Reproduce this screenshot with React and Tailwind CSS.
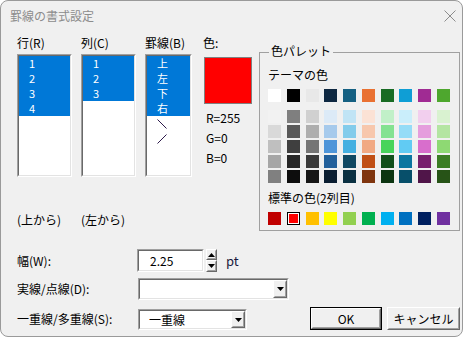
import React from "react"

const theme = ["#ffffff", "#000000", "#e8e8e8", "#0e2841", "#156082", "#e97132", "#196b24", "#0f9ed5", "#a02b93", "#4ea72e"]
const shades = [
  ["#f2f2f2", "#7f7f7f", "#d0d0d0", "#dceaf7", "#c0e4f5", "#fbe2d5", "#c1f0c8", "#caeefb", "#f2cfee", "#d9f2d0"],
  ["#d9d9d9", "#595959", "#aeaeae", "#a6caec", "#83cceb", "#f7c7ac", "#84e291", "#95dcf7", "#e59edd", "#b4e5a2"],
  ["#bfbfbf", "#3f3f3f", "#757575", "#4e95d9", "#45b0e1", "#f1a983", "#47d45a", "#61cbf3", "#d86ecc", "#8ed973"],
  ["#a6a6a6", "#262626", "#3a3a3a", "#215f9a", "#104862", "#c04f15", "#124f1a", "#0b76a0", "#77206d", "#3b7d23"],
  ["#808080", "#0d0d0d", "#171717", "#0a1e31", "#0a3041", "#7f350e", "#0c3511", "#074f6a", "#501549", "#275317"],
]
const standard = ["#c00000", "#ff0000", "#ffc000", "#ffff00", "#92d050", "#00b050", "#00b0f0", "#0070c0", "#002060", "#7030a0"]

const Sunken = ({ className, children }) => (
  <div className={`border border-t-[#a0a0a0] border-l-[#a0a0a0] border-r-white border-b-white ${className}`}>
    <div className="h-full w-full border border-t-[#696969] border-l-[#696969] border-r-[#e3e3e3] border-b-[#e3e3e3] bg-white">
      {children}
    </div>
  </div>
)

const ListBox = ({ width, items }) => (
  <Sunken className={`${width} h-[123px]`}>
    {items.map((it, i) => (
      <div
        key={i}
        className={`h-[15px] pl-[10px] flex items-center text-[11px] leading-[13px] overflow-hidden ${it.sel ? "bg-[#0078d7] text-white" : "text-black"}`}
      >
        {it.label}
      </div>
    ))}
  </Sunken>
)

const Diag = ({ flip }) => (
  <svg width="10" height="10" viewBox="0 0 10 10">
    {flip ? (
      <line x1="0.5" y1="9.5" x2="9.5" y2="0.5" stroke="#2d1a4a" strokeWidth="1" />
    ) : (
      <line x1="0.5" y1="0.5" x2="9.5" y2="9.5" stroke="#2d1a4a" strokeWidth="1" />
    )}
  </svg>
)

const Raised = ({ className, children }) => (
  <div className={`border border-t-white border-l-white border-r-[#696969] border-b-[#696969] bg-[#f0f0f0] ${className}`}>
    <div className="h-full w-full border border-t-[#f0f0f0] border-l-[#f0f0f0] border-r-[#a0a0a0] border-b-[#a0a0a0] flex items-center justify-center">
      {children}
    </div>
  </div>
)

const Tri = ({ up }) => (
  <svg width="7" height="4" viewBox="0 0 7 4">
    {up ? <path d="M0 4 L3.5 0 L7 4 Z" fill="#000" /> : <path d="M0 0 L7 0 L3.5 4 Z" fill="#000" />}
  </svg>
)

const Combo = ({ className, text }) => (
  <Sunken className={className}>
    <div className="h-full flex items-center">
      <div className="flex-1 pl-[9px] leading-none">{text}</div>
      <Raised className="w-[14px] h-full">
        <Tri />
      </Raised>
    </div>
  </Sunken>
)

export default function App() {
  return (
    <div className="w-[467px] h-[339px] bg-white font-['Noto_Sans_CJK_JP','Liberation_Sans',sans-serif] text-[12px] text-black">
      <div className="w-[463px] h-[337px] rounded-[8px] border border-[#9a9a9a] bg-[#f0f0f0] overflow-hidden flex flex-col">
        {/* title bar */}
        <div className="h-[29px] flex items-center justify-between pl-[9px] pr-[5px]">
          <span className="text-[#8c8c8c] text-[12px] leading-none">罫線の書式設定</span>
          <svg width="12" height="12" viewBox="0 0 12 12" className="mr-[1px]">
            <path d="M0.5 0.5 L11.5 11.5 M11.5 0.5 L0.5 11.5" stroke="#8c8c8c" strokeWidth="1" />
          </svg>
        </div>

        {/* top section */}
        <div className="h-[201px] flex pl-[16px] pt-[6px]">
          <div className="w-[55px] flex flex-col">
            <div className="h-[18px] leading-none pt-[1px]">行(R)</div>
            <ListBox
              width="w-[55px]"
              items={[
                { label: "1", sel: true },
                { label: "2", sel: true },
                { label: "3", sel: true },
                { label: "4", sel: true },
              ]}
            />
            <div className="mt-[37px] leading-none">(上から)</div>
          </div>
          <div className="w-[55px] ml-[9px] flex flex-col">
            <div className="h-[18px] leading-none pt-[1px]">列(C)</div>
            <ListBox
              width="w-[55px]"
              items={[
                { label: "1", sel: true },
                { label: "2", sel: true },
                { label: "3", sel: true },
              ]}
            />
            <div className="mt-[37px] leading-none">(左から)</div>
          </div>
          <div className="w-[47px] ml-[9px] flex flex-col">
            <div className="h-[18px] leading-none pt-[1px]">罫線(B)</div>
            <ListBox
              width="w-[47px]"
              items={[
                { label: "上", sel: true },
                { label: "左", sel: true },
                { label: "下", sel: true },
                { label: "右", sel: true },
                { label: <Diag />, sel: false },
                { label: <Diag flip />, sel: false },
              ]}
            />
          </div>
          <div className="w-[50px] ml-[11px] flex flex-col">
            <div className="h-[18px] leading-none pt-[1px]">色:</div>
            <div className="ml-[1px] mt-[3px] w-[48px] h-[47px] border border-[#808080] bg-[#ff0000]" />
            <div className="mt-[4px] pl-[3px]">
              <div className="h-[20px] flex items-center">R=255</div>
              <div className="h-[20px] flex items-center">G=0</div>
              <div className="h-[20px] flex items-center">B=0</div>
            </div>
          </div>

          {/* palette group */}
          <div className="relative ml-[6px] mt-[16px] w-[201px] h-[179px] border border-[#a0a0a0]">
            <div className="absolute -top-[8px] left-[9px] px-[2px] bg-[#f0f0f0] leading-none text-[12px]">色パレット</div>
            <div className="pl-[8px] pt-[14px]">
              <div className="h-[16px] flex items-center">テーマの色</div>
              <div className="mt-[6px] w-[182px] flex justify-between">
                {theme.map((c, i) => (
                  <div key={i} className="w-[13px] h-[13px]" style={{ background: c }} />
                ))}
              </div>
              <div className="mt-[8px] flex flex-col gap-[2px]">
                {shades.map((row, r) => (
                  <div key={r} className="w-[182px] flex justify-between">
                    {row.map((c, i) => (
                      <div key={i} className="w-[13px] h-[13px]" style={{ background: c }} />
                    ))}
                  </div>
                ))}
              </div>
              <div className="mt-[7px] h-[16px] flex items-center">標準の色(2列目)</div>
              <div className="mt-[6px] w-[182px] flex justify-between">
                {standard.map((c, i) =>
                  i === 1 ? (
                    <div key={i} className="w-[13px] h-[13px] border border-black bg-white p-[1px]">
                      <div className="w-full h-full" style={{ background: c }} />
                    </div>
                  ) : (
                    <div key={i} className="w-[13px] h-[13px]" style={{ background: c }} />
                  )
                )}
              </div>
            </div>
          </div>
        </div>

        {/* bottom rows */}
        <div className="pl-[16px] pr-[2px] flex flex-col">
          <div className="mt-[18px] h-[23px] flex items-center">
            <div className="w-[120px]">幅(W):</div>
            <Sunken className="w-[67px] h-[23px]">
              <div className="h-full flex items-center pl-[11px] leading-none">2.25</div>
            </Sunken>
            <div className="ml-[2px] flex flex-col w-[11px] h-[23px]">
              <Raised className="h-[11px]">
                <Tri up />
              </Raised>
              <Raised className="h-[12px]">
                <Tri />
              </Raised>
            </div>
            <div className="ml-[9px] text-[13px] text-[#1a1a40]">pt</div>
          </div>
          <div className="mt-[6px] h-[22px] flex items-center">
            <div className="w-[121px]">実線/点線(D):</div>
            <Combo className="w-[151px] h-[22px]" text="" />
          </div>
          <div className="mt-[7px] h-[23px] flex items-start">
            <div className="w-[121px] h-[23px] flex items-center">一重線/多重線(S):</div>
            <Combo className="mt-[2px] w-[109px] h-[21px]" text="一重線" />
            <div className="ml-auto flex gap-[5px]">
              <div className="w-[72px] h-[23px] border border-black">
                <Raised className="w-full h-full">OK</Raised>
              </div>
              <Raised className="w-[73px] h-[23px]">キャンセル</Raised>
            </div>
          </div>
        </div>
      </div>
    </div>
  )
}
